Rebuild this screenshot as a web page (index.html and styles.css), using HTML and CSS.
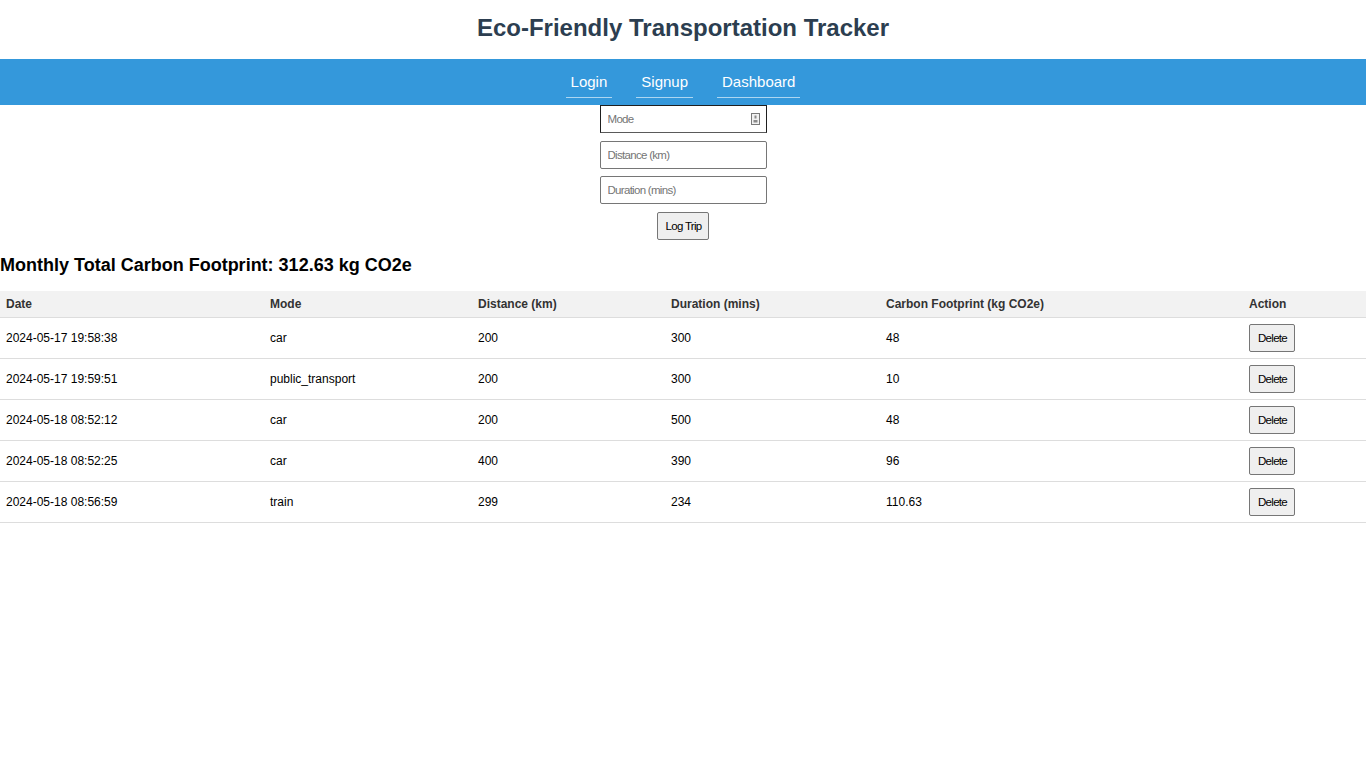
FILE: index.html
```html
<!DOCTYPE html>
<html lang="en">
<head>
<meta charset="utf-8">
<title>Eco-Friendly Transportation Tracker</title>
<link rel="stylesheet" href="styles.css">
</head>
<body>
<header class="site-header">
  <h1 class="title">Eco-Friendly Transportation Tracker</h1>
</header>
<nav class="nav">
  <a class="nav-link" href="#">Login</a>
  <a class="nav-link" href="#">Signup</a>
  <a class="nav-link" href="#">Dashboard</a>
</nav>
<form class="trip-form">
  <div class="select-wrap">
    <select class="field select">
      <option>Mode</option>
    </select>
    <svg class="select-icon" width="9" height="12" viewBox="0 0 9 12">
      <rect x="0.5" y="0.5" width="8" height="11" fill="#f2f2f2" stroke="#7a7a7a"/>
      <rect x="3.5" y="2.5" width="2" height="3" fill="#8a8a8a"/>
      <rect x="2.5" y="7" width="4" height="2.5" fill="#8a8a8a"/>
    </svg>
  </div>
  <input class="field input input-first" type="text" placeholder="Distance (km)">
  <input class="field input input-second" type="text" placeholder="Duration (mins)">
  <button class="btn" type="button">Log Trip</button>
</form>
<h3 class="total">Monthly Total Carbon Footprint: 312.63 kg CO2e</h3>
<table class="trips">
  <colgroup>
    <col class="c-date"><col class="c-mode"><col class="c-dist"><col class="c-dur"><col class="c-carbon"><col class="c-action">
  </colgroup>
  <thead>
    <tr><th>Date</th><th>Mode</th><th>Distance (km)</th><th>Duration (mins)</th><th>Carbon Footprint (kg CO2e)</th><th>Action</th></tr>
  </thead>
  <tbody>
    <tr><td>2024-05-17 19:58:38</td><td>car</td><td>200</td><td>300</td><td>48</td><td><button class="btn" type="button">Delete</button></td></tr>
    <tr><td>2024-05-17 19:59:51</td><td>public_transport</td><td>200</td><td>300</td><td>10</td><td><button class="btn" type="button">Delete</button></td></tr>
    <tr><td>2024-05-18 08:52:12</td><td>car</td><td>200</td><td>500</td><td>48</td><td><button class="btn" type="button">Delete</button></td></tr>
    <tr><td>2024-05-18 08:52:25</td><td>car</td><td>400</td><td>390</td><td>96</td><td><button class="btn" type="button">Delete</button></td></tr>
    <tr><td>2024-05-18 08:56:59</td><td>train</td><td>299</td><td>234</td><td>110.63</td><td><button class="btn" type="button">Delete</button></td></tr>
  </tbody>
</table>
</body>
</html>
```
FILE: styles.css
```css
html, body {
  margin: 0;
  padding: 0;
  background: #fff;
  font-family: "Liberation Sans", Arial, sans-serif;
  color: #000;
}

.site-header {
  padding: 14px 0 18px;
  text-align: center;
}

.title {
  margin: 0;
  font-size: 24px;
  line-height: 27px;
  font-weight: bold;
  color: #2c3e50;
}

.nav {
  background: #3498db;
  display: flex;
  justify-content: center;
  gap: 24px;
  padding: 8px 0 7px;
}

.nav-link {
  display: block;
  color: #fff;
  text-decoration: none;
  font-size: 15px;
  line-height: 17px;
  padding: 6px 5px 7px;
  border-bottom: 1px solid rgba(255, 255, 255, 0.6);
}

.trip-form {
  display: flex;
  flex-direction: column;
  align-items: center;
  margin: 0;
}

.select-wrap {
  position: relative;
  width: 167px;
  height: 28px;
  margin-bottom: 8px;
}

.field {
  box-sizing: border-box;
  width: 167px;
  height: 28px;
  margin: 0;
  padding: 0 7px;
  font-family: "Liberation Sans", Arial, sans-serif;
  font-size: 11.5px;
  letter-spacing: -0.7px;
  background: #fff;
  border-radius: 2px;
}

.select {
  appearance: none;
  -webkit-appearance: none;
  color: #757575;
  border: 1px solid #1f1f1f;
  border-bottom-color: #5a5a5a;
  border-radius: 0;
  outline: none;
}

.select-icon {
  position: absolute;
  right: 7px;
  top: 8px;
}

.input {
  border: 1px solid #767676;
  color: #000;
}

.input::placeholder {
  color: #757575;
}

.input-first {
  margin-bottom: 7px;
}

.input-second {
  margin-bottom: 8px;
}

.btn {
  box-sizing: border-box;
  height: 28px;
  padding: 0 7px 0 8px;
  margin: 0;
  font-family: "Liberation Sans", Arial, sans-serif;
  font-size: 11.5px;
  letter-spacing: -0.7px;
  color: #000;
  background: #efefef;
  border: 1px solid #767676;
  border-radius: 2px;
}

.total {
  margin: 14px 0 15px;
  font-size: 18px;
  line-height: 22px;
  font-weight: bold;
}

.trips {
  width: 100%;
  border-collapse: collapse;
  table-layout: fixed;
  font-size: 12px;
}

.c-date { width: 264px; }
.c-mode { width: 208px; }
.c-dist { width: 193px; }
.c-dur { width: 215px; }
.c-carbon { width: 363px; }
.c-action { width: 123px; }

.trips th {
  background: #f2f2f2;
  color: #333;
  font-weight: bold;
  text-align: left;
  padding: 6px;
  line-height: 14px;
  border-bottom: 1px solid #ddd;
}

.trips td {
  padding: 6px;
  line-height: 14px;
  border-bottom: 1px solid #ddd;
  vertical-align: middle;
}
```
